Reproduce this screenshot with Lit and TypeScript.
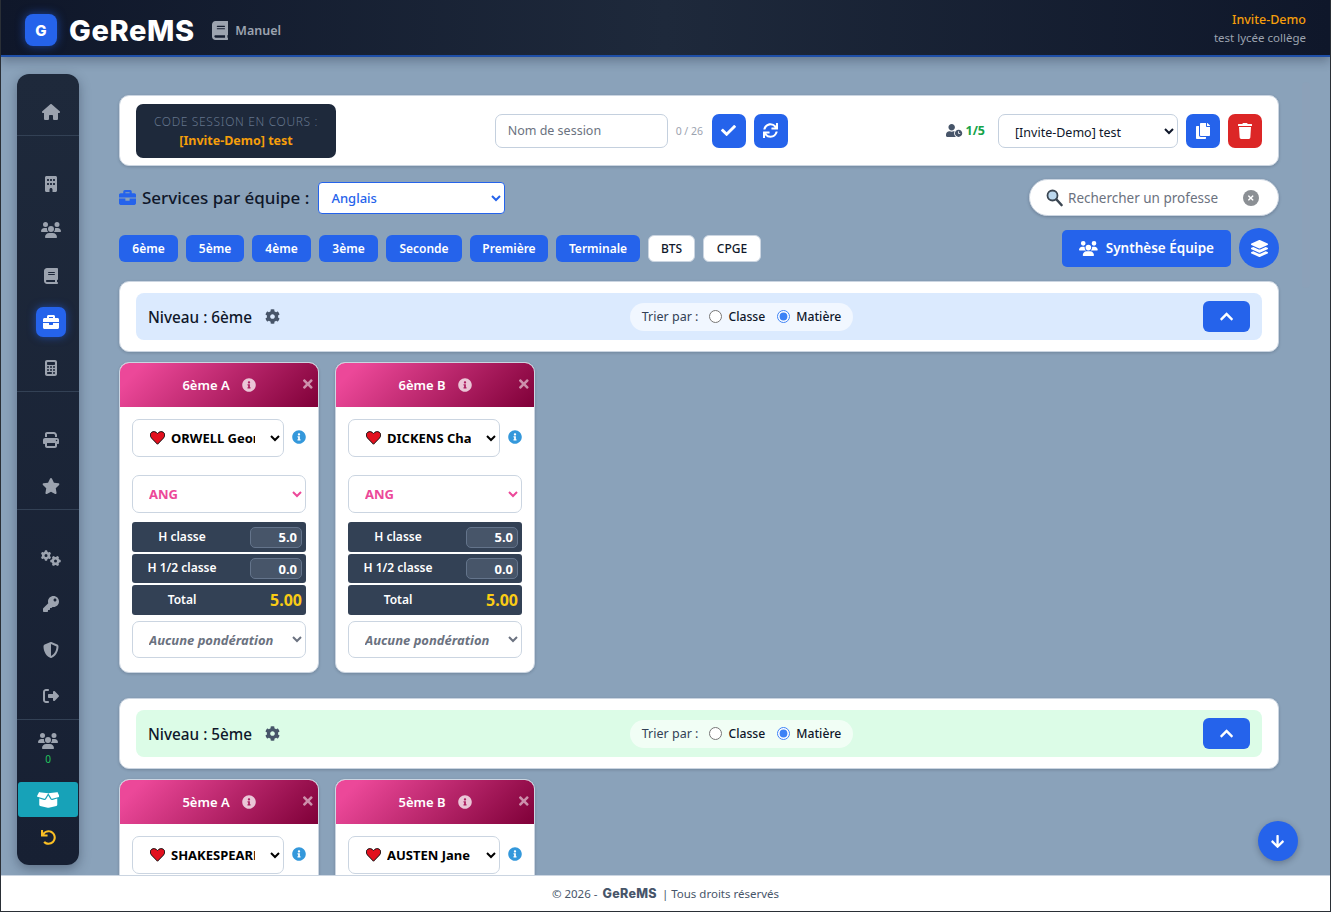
import { LitElement, html, css } from 'lit';
import { customElement } from 'lit/decorators.js';

const ICONS: Record<string, [number, string]> = {
  home: [576, 'M575.800 255.500c0 18-15 32.100-32 32.100h-32l.7 160.200c0 2.700-.2 5.400-.5 8.100V472c0 22.100-17.900 40-40 40H456c-1.100 0-2.200 0-3.300-.1c-1.400 .1-2.800 .1-4.200 .1H416 392c-22.100 0-40-17.900-40-40V448 384c0-17.700-14.300-32-32-32H256c-17.700 0-32 14.300-32 32v64 24c0 22.100-17.900 40-40 40H160 128.100c-1.500 0-3-.1-4.500-.2c-1.200 .1-2.400 .2-3.600 .2H104c-22.100 0-40-17.900-40-40V360c0-.9 0-1.900 .1-2.800V287.600H32c-18 0-32-14-32-32.100c0-9 3-17 10-24L266.400 8c7-7 15-8 22-8s15 2 21 7L564.800 231.500c8 7 12 15 11 24z'],
  building: [384, 'M48 0C21.500 0 0 21.500 0 48V464c0 26.500 21.500 48 48 48h96V432c0-26.500 21.500-48 48-48s48 21.500 48 48v80h96c26.500 0 48-21.500 48-48V48c0-26.500-21.500-48-48-48H48zM64 240c0-8.800 7.200-16 16-16h32c8.800 0 16 7.200 16 16v32c0 8.800-7.200 16-16 16H80c-8.800 0-16-7.200-16-16V240zm112-16h32c8.800 0 16 7.200 16 16v32c0 8.800-7.200 16-16 16H176c-8.800 0-16-7.200-16-16V240c0-8.800 7.200-16 16-16zm80 16c0-8.800 7.200-16 16-16h32c8.800 0 16 7.200 16 16v32c0 8.800-7.200 16-16 16H272c-8.800 0-16-7.200-16-16V240zM80 96h32c8.800 0 16 7.200 16 16v32c0 8.800-7.200 16-16 16H80c-8.800 0-16-7.200-16-16V112c0-8.800 7.200-16 16-16zm80 16c0-8.800 7.200-16 16-16h32c8.800 0 16 7.200 16 16v32c0 8.800-7.200 16-16 16H176c-8.800 0-16-7.200-16-16V112zM272 96h32c8.800 0 16 7.200 16 16v32c0 8.800-7.200 16-16 16H272c-8.800 0-16-7.200-16-16V112c0-8.800 7.200-16 16-16z'],
  users: [640, 'M144 0a80 80 0 1 1 0 160A80 80 0 1 1 144 0zM512 0a80 80 0 1 1 0 160A80 80 0 1 1 512 0zM0 298.700C0 239.800 47.800 192 106.700 192h42.700c15.900 0 31 3.500 44.600 9.700c-1.300 7.200-1.900 14.700-1.900 22.300c0 38.200 16.800 72.500 43.300 96c-.2 0-.4 0-.7 0H21.300C9.600 320 0 310.400 0 298.700zM405.300 320c-.2 0-.4 0-.7 0c26.600-23.500 43.300-57.800 43.300-96c0-7.600-.7-15-1.900-22.300c13.600-6.300 28.700-9.700 44.600-9.700h42.700C592.200 192 640 239.800 640 298.700c0 11.800-9.600 21.300-21.300 21.300H405.400zM224 224a96 96 0 1 1 192 0 96 96 0 1 1 -192 0zM128 485.300C128 411.700 187.700 352 261.300 352H378.700C452.300 352 512 411.700 512 485.300c0 14.700-11.900 26.700-26.700 26.700H154.700c-14.700 0-26.700-11.900-26.700-26.700z'],
  book: [448, 'M96 0C43 0 0 43 0 96V416c0 53 43 96 96 96H384h32c17.700 0 32-14.300 32-32s-14.300-32-32-32V384c17.700 0 32-14.300 32-32V32c0-17.700-14.300-32-32-32H384 96zm0 384H352v64H96c-17.700 0-32-14.300-32-32s14.300-32 32-32zm32-240c0-8.800 7.200-16 16-16H336c8.800 0 16 7.200 16 16s-7.200 16-16 16H144c-8.800 0-16-7.200-16-16zm16 48H336c8.800 0 16 7.200 16 16s-7.200 16-16 16H144c-8.800 0-16-7.200-16-16s7.200-16 16-16z'],
  briefcase: [512, 'M320 336c0 8.840-7.160 16-16 16h-96c-8.840 0-16-7.160-16-16v-48H0v144c0 25.600 22.400 48 48 48h416c25.600 0 48-22.400 48-48V288H320v48zm144-208h-80V80c0-25.600-22.400-48-48-48H176c-25.600 0-48 22.400-48 48v48H48c-25.600 0-48 22.400-48 48v80h512v-80c0-25.600-22.400-48-48-48zm-144 0H192V96h128v32z'],
  calculator: [384, 'M64 0C28.700 0 0 28.700 0 64V448c0 35.300 28.700 64 64 64H320c35.300 0 64-28.700 64-64V64c0-35.300-28.700-64-64-64H64zM96 64H288c17.700 0 32 14.300 32 32v32c0 17.700-14.300 32-32 32H96c-17.700 0-32-14.300-32-32V96c0-17.700 14.300-32 32-32zm32 160a32 32 0 1 1 -64 0 32 32 0 1 1 64 0zM96 352a32 32 0 1 1 0-64 32 32 0 1 1 0 64zM64 416c0-17.700 14.300-32 32-32h96c17.700 0 32 14.300 32 32s-14.300 32-32 32H96c-17.700 0-32-14.300-32-32zM192 256a32 32 0 1 1 0-64 32 32 0 1 1 0 64zm32 64a32 32 0 1 1 -64 0 32 32 0 1 1 64 0zm64-64a32 32 0 1 1 0-64 32 32 0 1 1 0 64zm32 64a32 32 0 1 1 -64 0 32 32 0 1 1 64 0zM288 448a32 32 0 1 1 0-64 32 32 0 1 1 0 64z'],
  print: [512, 'M128 0C92.700 0 64 28.700 64 64v96h64V64H354.700L384 93.300V160h64V93.300c0-17-6.700-33.300-18.700-45.300L400 18.700C388 6.700 371.700 0 354.700 0H128zM384 352v32 64H128V384 368 352H384zm64 32h32c17.700 0 32-14.300 32-32V256c0-35.300-28.700-64-64-64H64c-35.300 0-64 28.700-64 64v96c0 17.700 14.300 32 32 32H64v64c0 35.300 28.700 64 64 64H384c35.300 0 64-28.700 64-64V384zM432 248a24 24 0 1 1 0 48 24 24 0 1 1 0-48z'],
  star: [576, 'M259.300 17.800L194 150.200 47.900 171.500c-26.200 3.800-36.700 36.100-17.700 54.600l105.700 103-25 145.500c-4.500 26.300 23.200 46 46.400 33.700L288 439.600l130.700 68.700c23.200 12.200 50.900-7.400 46.400-33.700l-25-145.500 105.700-103c19-18.500 8.500-50.800-17.700-54.600L382 150.200 316.700 17.800c-11.700-23.600-45.600-23.900-57.400 0z'],
  cogs: [640, 'M308.500 135.300c7.100-6.300 9.900-16.200 6.200-25c-2.300-5.300-4.800-10.500-7.600-15.500L304 89.400c-3-5-6.300-9.900-9.800-14.600c-5.700-7.600-15.700-10.100-24.700-7.100l-28.200 9.300c-10.700-8.800-23-16-36.200-20.900L199 27.100c-1.900-9.300-9.100-16.700-18.500-17.800C173.900 8.400 167.200 8 160.400 8h-.7c-6.800 0-13.500 .4-20.100 1.200c-9.400 1.100-16.600 8.600-18.500 17.800L115 56.100c-13.300 5-25.500 12.100-36.200 20.900L50.500 67.800c-9-3-19-.5-24.700 7.100c-3.500 4.700-6.800 9.600-9.900 14.600l-3 5.300c-2.800 5-5.300 10.200-7.600 15.600c-3.700 8.700-.9 18.600 6.200 25l22.200 19.800C32.600 161.900 32 168.900 32 176s.6 14.100 1.700 20.900L11.500 216.700c-7.100 6.300-9.900 16.200-6.200 25c2.300 5.300 4.800 10.500 7.600 15.600l3 5.200c3 5.100 6.300 9.900 9.900 14.600c5.700 7.600 15.700 10.100 24.700 7.100l28.200-9.300c10.700 8.800 23 16 36.200 20.900l6.100 29.100c1.900 9.300 9.100 16.700 18.500 17.800c6.700 .8 13.500 1.200 20.400 1.200s13.700-.4 20.400-1.200c9.400-1.100 16.600-8.600 18.500-17.800l6.100-29.100c13.300-5 25.500-12.100 36.200-20.900l28.200 9.300c9 3 19 .5 24.700-7.100c3.500-4.700 6.800-9.500 9.800-14.600l3.100-5.400c2.800-5 5.300-10.100 7.600-15.500c3.700-8.700 .9-18.600-6.200-25l-22.200-19.800c1.100-6.800 1.700-13.800 1.700-20.900s-.6-14.100-1.700-20.900l22.200-19.800zM112 176a48 48 0 1 1 96 0 48 48 0 1 1 -96 0zM504.700 500.500c6.300 7.100 16.200 9.900 25 6.200c5.300-2.300 10.500-4.800 15.500-7.600l5.400-3.100c5-3 9.900-6.300 14.600-9.800c7.600-5.700 10.100-15.700 7.100-24.700l-9.300-28.200c8.800-10.700 16-23 20.900-36.200l29.100-6.100c9.300-1.900 16.700-9.100 17.800-18.500c.8-6.700 1.200-13.500 1.200-20.400s-.4-13.700-1.200-20.400c-1.100-9.400-8.600-16.600-17.800-18.500L583.900 307c-5-13.300-12.100-25.500-20.900-36.200l9.300-28.200c3-9 .5-19-7.100-24.700c-4.700-3.500-9.600-6.800-14.600-9.900l-5.300-3c-5-2.800-10.200-5.300-15.600-7.600c-8.700-3.700-18.600-.9-25 6.200l-19.800 22.200c-6.800-1.100-13.800-1.700-20.900-1.700s-14.100 .6-20.900 1.700l-19.800-22.200c-6.300-7.100-16.200-9.900-25-6.200c-5.300 2.300-10.500 4.800-15.600 7.600l-5.200 3c-5.100 3-9.900 6.300-14.600 9.900c-7.600 5.700-10.100 15.700-7.100 24.700l9.300 28.200c-8.800 10.700-16 23-20.900 36.200L315.100 313c-9.300 1.900-16.700 9.100-17.800 18.500c-.8 6.700-1.200 13.500-1.200 20.400s.4 13.700 1.200 20.400c1.100 9.400 8.600 16.600 17.800 18.500l29.100 6.100c5 13.300 12.100 25.500 20.900 36.200l-9.300 28.200c-3 9-.5 19 7.100 24.700c4.700 3.500 9.500 6.800 14.600 9.800l5.400 3.100c5 2.800 10.100 5.300 15.500 7.600c8.700 3.700 18.600 .9 25-6.200l19.800-22.200c6.800 1.100 13.800 1.700 20.900 1.700s14.100-.6 20.900-1.700l19.800 22.200zM464 304a48 48 0 1 1 0 96 48 48 0 1 1 0-96z'],
  key: [512, 'M512 176.001C512 273.203 433.202 352 336 352c-11.220 0-22.190-1.062-32.827-3.069l-24.012 27.014A23.999 23.999 0 0 1 261.223 384H224v40c0 13.255-10.745 24-24 24h-40v40c0 13.255-10.745 24-24 24H24c-13.255 0-24-10.745-24-24v-78.059c0-6.365 2.529-12.470 7.029-16.971l161.802-161.802C163.108 213.814 160 195.271 160 176 160 78.798 238.797.001 335.999 0 433.488-.001 512 78.511 512 176.001zM336 128c0 26.510 21.490 48 48 48s48-21.490 48-48-21.490-48-48-48-48 21.490-48 48z'],
  shield: [512, 'M256 0c4.600 0 9.200 1 13.400 2.900L457.700 82.800c22 9.300 38.400 31 38.300 57.200c-.5 99.200-41.300 280.700-213.600 363.200c-16.700 8-36.100 8-52.800 0C57.300 420.700 16.500 239.200 16 140c-.1-26.200 16.300-47.900 38.300-57.200L242.700 2.900C246.800 1 251.400 0 256 0zm0 66.800V444.800C394 378 431.100 230.100 432 141.400L256 66.800l0 0z'],
  signout: [512, 'M377.900 105.900L500.700 228.700c7.200 7.200 11.300 17.100 11.300 27.300s-4.100 20.100-11.300 27.300L377.900 406.100c-6.400 6.400-15 9.900-24 9.900c-18.700 0-33.900-15.200-33.900-33.900l0-62.100-128 0c-17.700 0-32-14.300-32-32l0-64c0-17.700 14.300-32 32-32l128 0 0-62.100c0-18.700 15.200-33.900 33.900-33.900c9 0 17.600 3.600 24 9.900zM160 96L96 96c-17.700 0-32 14.300-32 32l0 256c0 17.700 14.300 32 32 32l64 0c17.700 0 32 14.300 32 32s-14.300 32-32 32l-64 0c-53 0-96-43-96-96L0 128C0 75 43 32 96 32l64 0c17.700 0 32 14.300 32 32s-14.300 32-32 32z'],
  boxopen: [640, 'M425.700 256c-16.900 0-32.800-9-41.400-23.400L320 126l-64.200 106.600c-8.700 14.500-24.600 23.500-41.500 23.500-4.500 0-9-.6-13.300-1.900L64 215v178c0 14.700 10 27.500 24.200 31l216.200 54.100c10.200 2.500 20.900 2.500 31 0L551.800 424c14.200-3.600 24.200-16.400 24.200-31V215l-137 39.100c-4.300 1.300-8.800 1.900-13.300 1.900zm212.600-112.200L586.800 41c-3.100-6.200-9.800-9.800-16.700-8.900L320 64l91.700 152.100c3.800 6.300 11.400 9.300 18.500 7.300l197.900-56.500c9.900-2.900 14.700-13.900 10.200-23.100zM53.200 41L1.700 143.800c-4.600 9.200.3 20.200 10.100 23l197.900 56.500c7.100 2 14.700-1 18.500-7.300L320 64 69.800 32.100c-6.900-.8-13.500 2.700-16.600 8.900z'],
  undo: [512, 'M212.333 224.333H12c-6.627 0-12-5.373-12-12V12C0 5.373 5.373 0 12 0h48c6.627 0 12 5.373 12 12v78.112C117.773 39.279 184.260 7.470 258.175 8.007c136.906.994 246.448 111.623 246.157 248.532C504.041 393.258 393.120 504 256.333 504c-64.089 0-122.496-24.313-166.510-64.215-5.099-4.622-5.334-12.554-.467-17.420l33.967-33.967c4.474-4.474 11.662-4.717 16.401-.525C170.760 415.336 211.580 432 256.333 432c97.268 0 176-78.716 176-176 0-97.267-78.716-176-176-176-58.496 0-110.280 28.476-142.274 72.333h98.274c6.627 0 12 5.373 12 12v48c0 6.627-5.373 12-12 12z'],
  check: [512, 'M173.898 439.404l-166.400-166.400c-9.997-9.997-9.997-26.206 0-36.204l36.203-36.204c9.997-9.998 26.207-9.998 36.204 0L192 312.690 432.095 72.596c9.997-9.997 26.207-9.997 36.204 0l36.203 36.204c9.997 9.997 9.997 26.206 0 36.204l-294.400 294.401c-9.998 9.997-26.207 9.997-36.204-.001z'],
  sync: [512, 'M440.650 12.570l4 82.770A247.160 247.160 0 0 0 255.830 8C134.730 8 33.910 94.920 12.290 209.820A12 12 0 0 0 24.090 224h49.050a12 12 0 0 0 11.670-9.260 175.910 175.910 0 0 1 317-56.940l-101.460-4.860a12 12 0 0 0-12.570 12v47.410a12 12 0 0 0 12 12H500a12 12 0 0 0 12-12V12a12 12 0 0 0-12-12h-47.370a12 12 0 0 0-11.980 12.570zM255.830 432a175.610 175.610 0 0 1-146-77.800l101.800 4.870a12 12 0 0 0 12.570-12v-47.400a12 12 0 0 0-12-12H12a12 12 0 0 0-12 12V500a12 12 0 0 0 12 12h47.350a12 12 0 0 0 12-12.600l-4.150-82.570A247.170 247.170 0 0 0 255.830 504c121.110 0 221.930-86.920 243.550-201.820a12 12 0 0 0-11.800-14.180h-49.050a12 12 0 0 0-11.670 9.260A175.860 175.860 0 0 1 255.830 432z'],
  copy: [448, 'M320 448v40c0 13.255-10.745 24-24 24H24c-13.255 0-24-10.745-24-24V120c0-13.255 10.745-24 24-24h72v296c0 30.879 25.121 56 56 56h168zm0-344V0H152c-13.255 0-24 10.745-24 24v368c0 13.255 10.745 24 24 24h272c13.255 0 24-10.745 24-24V128H344c-13.200 0-24-10.800-24-24zm120.971-31.029L375.029 7.029A24 24 0 0 0 358.059 0H352v96h96v-6.059a24 24 0 0 0-7.029-16.970z'],
  trash: [448, 'M432 32H312l-9.400-18.700A24 24 0 0 0 281.100 0H166.800a23.720 23.720 0 0 0-21.400 13.300L136 32H16A16 16 0 0 0 0 48v32a16 16 0 0 0 16 16h416a16 16 0 0 0 16-16V48a16 16 0 0 0-16-16zM53.200 467a48 48 0 0 0 47.900 45h245.800a48 48 0 0 0 47.900-45L416 128H32z'],
  userclock: [640, 'M496 224c-79.600 0-144 64.400-144 144s64.400 144 144 144 144-64.400 144-144-64.400-144-144-144zm64 150.300c0 5.300-4.400 9.700-9.700 9.700h-60.600c-5.300 0-9.700-4.400-9.700-9.700v-76.600c0-5.300 4.400-9.700 9.700-9.700h12.600c5.300 0 9.700 4.400 9.700 9.700V352h38.300c5.300 0 9.700 4.400 9.700 9.700v12.600zM320 368c0-27.800 6.700-54.100 18.200-77.500-8-1.500-16.200-2.500-24.600-2.500h-16.700c-22.200 10.200-46.900 16-72.900 16s-50.600-5.800-72.900-16h-16.700C60.200 288 0 348.200 0 422.400V464c0 26.500 21.500 48 48 48h347.100c-45.300-31.900-75.100-84.500-75.100-144zm-96-112c70.700 0 128-57.300 128-128S294.700 0 224 0 96 57.300 96 128s57.300 128 128 128z'],
  layers: [512, 'M12.410 148.020l232.940 105.670c6.800 3.090 14.490 3.090 21.290 0l232.940-105.670c16.550-7.510 16.550-32.520 0-40.030L266.650 2.310a25.607 25.607 0 0 0-21.290 0L12.410 107.980c-16.550 7.510-16.550 32.530 0 40.040zm487.180 88.280l-58.090-26.330-161.640 73.270c-7.560 3.430-15.590 5.170-23.860 5.170s-16.290-1.740-23.860-5.170L70.510 209.970l-58.100 26.330c-16.550 7.500-16.550 32.500 0 40l232.940 105.590c6.800 3.080 14.490 3.080 21.290 0L499.590 276.300c16.550-7.500 16.550-32.500 0-40zm0 127.800l-57.870-26.230-161.860 73.370c-7.560 3.430-15.590 5.170-23.860 5.170s-16.290-1.740-23.860-5.170L70.290 337.870 12.410 364.100c-16.550 7.500-16.550 32.500 0 40l232.940 105.590c6.800 3.080 14.490 3.080 21.290 0L499.590 404.100c16.550-7.500 16.550-32.500 0-40z'],
  chevup: [448, 'M240.971 130.524l194.343 194.343c9.373 9.373 9.373 24.569 0 33.941l-22.667 22.667c-9.357 9.357-24.522 9.375-33.901.040L224 227.495 69.255 381.516c-9.379 9.335-24.544 9.317-33.901-.040l-22.667-22.667c-9.373-9.373-9.373-24.569 0-33.941L207.030 130.525c9.372-9.373 24.568-9.373 33.941-.001z'],
  arrowdown: [448, 'M413.100 222.500l22.200 22.200c9.400 9.400 9.400 24.600 0 33.900L241 473c-9.400 9.400-24.600 9.400-33.900 0L12.700 278.600c-9.400-9.400-9.400-24.600 0-33.900l22.200-22.200c9.500-9.500 25-9.300 34.300.4L184 343.400V56c0-13.300 10.700-24 24-24h32c13.300 0 24 10.700 24 24v287.400l114.800-120.500c9.300-9.800 24.800-10 34.300-.4z'],
  info: [512, 'M256 8C119.043 8 8 119.083 8 256c0 136.997 111.043 248 248 248s248-111.003 248-248C504 119.083 392.957 8 256 8zm0 110c23.196 0 42 18.804 42 42s-18.804 42-42 42-42-18.804-42-42 18.804-42 42-42zm56 254c0 6.627-5.373 12-12 12h-88c-6.627 0-12-5.373-12-12v-24c0-6.627 5.373-12 12-12h12v-64h-12c-6.627 0-12-5.373-12-12v-24c0-6.627 5.373-12 12-12h64c6.627 0 12 5.373 12 12v100h12c6.627 0 12 5.373 12 12v24z'],
  times: [352, 'M242.720 256l100.070-100.070c12.280-12.280 12.280-32.190 0-44.480l-22.240-22.240c-12.280-12.280-32.190-12.280-44.480 0L176 189.280 75.930 89.210c-12.280-12.280-32.190-12.280-44.480 0L9.210 111.450c-12.280 12.280-12.280 32.190 0 44.480L109.280 256 9.210 356.070c-12.280 12.280-12.280 32.190 0 44.480l22.240 22.240c12.280 12.280 32.200 12.280 44.480 0L176 322.720l100.070 100.070c12.280 12.280 32.200 12.280 44.480 0l22.240-22.240c12.280-12.280 12.280-32.190 0-44.480L242.720 256z'],
  cog: [512, 'M487.400 315.700l-42.600-24.600c4.300-23.200 4.300-47 0-70.200l42.600-24.600c4.900-2.800 7.100-8.600 5.500-14-11.100-35.600-30-67.800-54.700-94.600-3.800-4.100-10-5.100-14.800-2.300L380.800 110c-17.900-15.400-38.500-27.300-60.800-35.100V25.800c0-5.600-3.900-10.500-9.400-11.700-36.700-8.200-74.300-7.800-109.200 0-5.500 1.200-9.400 6.100-9.400 11.700V75c-22.200 7.900-42.800 19.800-60.800 35.100L88.700 85.500c-4.900-2.800-11-1.900-14.800 2.300-24.700 26.700-43.600 58.900-54.700 94.600-1.700 5.400.6 11.200 5.500 14L67.300 221c-4.300 23.200-4.300 47 0 70.200l-42.600 24.600c-4.900 2.800-7.100 8.600-5.500 14 11.100 35.600 30 67.800 54.700 94.600 3.800 4.100 10 5.100 14.800 2.300l42.600-24.600c17.900 15.400 38.500 27.300 60.800 35.100v49.200c0 5.600 3.900 10.500 9.400 11.700 36.700 8.200 74.300 7.800 109.200 0 5.500-1.200 9.400-6.100 9.400-11.700v-49.200c22.200-7.900 42.800-19.800 60.800-35.100l42.600 24.600c4.900 2.800 11 1.900 14.800-2.300 24.700-26.700 43.600-58.900 54.700-94.600 1.500-5.500-.7-11.300-5.600-14.100zM256 336c-44.100 0-80-35.900-80-80s35.900-80 80-80 80 35.900 80 80-35.900 80-80 80z'],
};

const icon = (name: string, size: number) => {
  const [w, d] = ICONS[name];
  return html`<svg class="ic" viewBox="0 0 ${w} 512" height=${size} width=${(size * w) / 512} fill="currentColor"><path d=${d}></path></svg>`;
};

const NAV_GROUPS = [
  ['home'],
  ['building', 'users', 'book', 'briefcase', 'calculator'],
  ['print', 'star'],
  ['cogs', 'key', 'shield', 'signout'],
];

// name, button width
const LEVELS: [string, number][] = [
  ['6ème', 59], ['5ème', 58], ['4ème', 59], ['3ème', 59],
  ['Seconde', 76], ['Première', 78], ['Terminale', 84],
];
const OTHER_LEVELS: [string, number][] = [['BTS', 47], ['CPGE', 58]];

const SECTIONS = [
  {
    name: '6ème', tint: 'blue',
    classes: [
      { name: '6ème A', prof: 'ORWELL George' },
      { name: '6ème B', prof: 'DICKENS Charles' },
    ],
  },
  {
    name: '5ème', tint: 'green',
    classes: [
      { name: '5ème A', prof: 'SHAKESPEARE William' },
      { name: '5ème B', prof: 'AUSTEN Jane' },
    ],
  },
];

@customElement('app-root')
export class AppRoot extends LitElement {
  static styles = css`
    :host {
      display: flex;
      flex-direction: column;
      height: 912px;
      box-sizing: border-box;
      border: 1px solid #2a2f36;
      border-top: 0;
      overflow: hidden;
      position: relative;
      font-family: "Noto Sans", sans-serif;
      color: #0f172a;
      background: #8aa2ba;
    }
    * { box-sizing: border-box; }
    .ic { display: block; flex: none; }
    select, input { font-family: inherit; }

    .top {
      height: 57px;
      flex: none;
      display: flex;
      align-items: center;
      padding: 5px 24px 0;
      background: linear-gradient(90deg, #0f172a, #1e293b 50%, #0f172a);
      border-bottom: 2px solid #1e4fa8;
      box-shadow: 0 4px 10px rgba(15, 23, 42, 0.3);
      z-index: 2;
    }
    .logo {
      width: 32px;
      height: 32px;
      border-radius: 8px;
      background: #2563eb;
      color: #fff;
      font: 800 15px Inter, sans-serif;
      display: flex;
      align-items: center;
      justify-content: center;
      box-shadow: 0 0 10px rgba(37, 99, 235, 0.6);
    }
    .brand {
      margin-left: 12px;
      font: 800 29px Inter, sans-serif;
      letter-spacing: 0.6px;
      color: #fff;
    }
    .manual {
      margin-left: 17px;
      display: flex;
      align-items: center;
      gap: 7px;
      color: #9ca3af;
      font-size: 12.5px;
      font-weight: 600;
    }
    .who {
      margin: -4px 0 0 auto;
      text-align: right;
      line-height: 17px;
    }
    .who b { display: block; color: #f59e0b; font-size: 12.5px; font-weight: 500; }
    .who span { color: #9ca3af; font-size: 11.5px; }

    .main {
      flex: 1;
      min-height: 0;
      display: flex;
      gap: 40px;
      padding: 17px 0 10px 16px;
      overflow: hidden;
    }
    .side {
      width: 62px;
      flex: none;
      height: 791px;
      border-radius: 12px;
      background: linear-gradient(180deg, #1e293b, #172033);
      box-shadow: 0 4px 12px rgba(15, 23, 42, 0.35);
      padding-top: 15px;
      color: #9ca3af;
      display: flex;
      flex-direction: column;
    }
    .group {
      padding: 0 1px 0 7px;
      border-bottom: 1px solid #334155;
    }
    .group + .group { margin-top: 25px; }
    .item {
      height: 46px;
      display: flex;
      align-items: center;
      justify-content: center;
    }
    .item.on span {
      width: 30px;
      height: 30px;
      border-radius: 7px;
      background: #2563eb;
      color: #fff;
      display: flex;
      align-items: center;
      justify-content: center;
      box-shadow: 0 0 8px rgba(37, 99, 235, 0.6);
    }
    .online {
      padding-top: 13px;
      height: 62px;
      display: flex;
      flex-direction: column;
      align-items: center;
      font-size: 10px;
      color: #22c55e;
    }
    .online .ic { color: #9ca3af; margin-bottom: 3px; }
    .box {
      margin: 0 1px;
      height: 35px;
      border-radius: 3px;
      background: #17a2b8;
      color: #fff;
      display: flex;
      align-items: center;
      justify-content: center;
    }
    .undo {
      color: #fbbf24;
      flex: 1;
      display: flex;
      justify-content: center;
      padding-top: 13px;
    }

    .content {
      width: 1160px;
      flex: none;
      padding-top: 21px;
    }
    .card {
      background: #fff;
      border-radius: 10px;
      border: 1px solid #cbd5e1;
      box-shadow: 0 1px 3px rgba(15, 23, 42, 0.2);
    }
    .session {
      height: 71px;
      padding: 0 16px;
      display: flex;
      align-items: center;
      justify-content: space-between;
    }
    .code {
      width: 200px;
      height: 54px;
      border-radius: 7px;
      background: #1e293b;
      text-align: center;
      padding-top: 8px;
      line-height: 19px;
    }
    .code span { display: block; font-size: 12px; font-weight: 300; letter-spacing: 0.65px; color: #64748b; }
    .code b { display: block; font-size: 12.5px; font-weight: 700; color: #f59e0b; }
    .row { display: flex; align-items: center; }
    .g8 { gap: 8px; }
    .field {
      height: 34px;
      border: 1px solid #c4d0de;
      border-radius: 7px;
      background: #fff;
      padding: 0 12px;
      font-size: 12.5px;
      color: #0f172a;
      outline: none;
    }
    .field::placeholder { color: #6b7280; opacity: 1; }
    .name { width: 173px; }
    .count { font-size: 10.5px; color: #9ca3af; margin-left: 8px; width: 28px; white-space: nowrap; }
    .sq {
      width: 34px;
      height: 34px;
      border-radius: 7px;
      background: #2563eb;
      color: #fff;
      display: flex;
      align-items: center;
      justify-content: center;
    }
    .sq.red { background: #dc2626; }
    .quota {
      display: flex;
      align-items: center;
      gap: 3px;
      color: #475569;
      margin-right: 13px;
    }
    .quota b { color: #16a34a; font-size: 12.5px; font-weight: 700; }
    .sessel { width: 180px; padding-top: 3px; }

    .line {
      display: flex;
      align-items: center;
      margin-top: 13px;
      height: 37px;
    }
    .title {
      display: flex;
      align-items: center;
      gap: 6px;
      font-size: 17px;
      font-weight: 500;
      color: #0f172a;
    }
    .title .ic { color: #2563eb; }
    .team {
      margin-left: 9px;
      width: 187px;
      height: 32px;
      border: 1px solid #2563eb;
      border-radius: 4px;
      background: #fff;
      color: #2563eb;
      font-size: 13px;
      font-weight: 500;
      padding-left: 8px;
      outline: none;
    }
    .search {
      margin-left: auto;
      width: 250px;
      height: 37px;
      border-radius: 19px;
      background: #fff;
      border: 1px solid #cbd5e1;
      box-shadow: 0 1px 3px rgba(15, 23, 42, 0.25);
      display: flex;
      align-items: center;
      padding: 0 18px 0 16px;
    }
    .search input {
      flex: none;
      width: 150px;
      margin: 0 25px 0 5px;
      border: 0;
      padding: 0;
      font-size: 13.5px;
      outline: none;
      background: transparent;
    }
    .search input::placeholder { color: #6b7280; opacity: 1; }
    .clear {
      width: 16px;
      height: 16px;
      border-radius: 50%;
      background: #8b8f94;
      color: #fff;
      display: flex;
      align-items: center;
      justify-content: center;
      flex: none;
    }

    .levels {
      display: flex;
      align-items: center;
      gap: 8px;
      margin-top: 12px;
      height: 40px;
    }
    .lvl {
      height: 27px;
      flex: none;
      border-radius: 6px;
      background: #2563eb;
      color: #fff;
      font-size: 12px;
      font-weight: 600;
      display: flex;
      align-items: center;
      justify-content: center;
    }
    .lvl.off {
      background: #fff;
      color: #0f172a;
      font-weight: 500;
      border: 1px solid #cbd5e1;
    }
    .synth {
      margin-left: auto;
      width: 169px;
      height: 37px;
      border-radius: 5px;
      background: #2563eb;
      color: #fff;
      font-size: 13.5px;
      font-weight: 600;
      display: flex;
      align-items: center;
      justify-content: center;
      gap: 8px;
    }
    .round {
      width: 40px;
      height: 40px;
      border-radius: 50%;
      background: #2563eb;
      color: #fff;
      display: flex;
      align-items: center;
      justify-content: center;
    }

    .section { margin-top: 13px; }
    .section + .section { margin-top: 25px; }
    .head { height: 71px; padding: 11px 16px; }
    .band {
      height: 47px;
      border-radius: 8px;
      padding: 0 12px;
      display: flex;
      align-items: center;
      justify-content: space-between;
    }
    .band.blue { background: #dbeafe; }
    .band.green { background: #dcfce7; }
    .lname {
      display: flex;
      align-items: center;
      gap: 13px;
      font-size: 15.3px;
      font-weight: 500;
    }
    .lname .ic { color: #475569; }
    .sort {
      height: 28px;
      border-radius: 14px;
      background: rgba(255, 255, 255, 0.6);
      padding: 0 12px;
      display: flex;
      align-items: center;
      font-size: 12.2px;
      color: #0f172a;
      font-weight: 500;
    }
    .sort span { color: #334155; margin-right: 11px; font-weight: 400; font-size: 12.5px; }
    .sort input { margin: 0 6px 0 0; width: 13px; height: 13px; accent-color: #3b82f6; }
    .sort label { display: flex; align-items: center; margin-right: 12px; }
    .sort label:last-child { margin-right: 0; }
    .fold {
      width: 47px;
      height: 31px;
      border-radius: 6px;
      background: #2563eb;
      color: #fff;
      display: flex;
      align-items: center;
      justify-content: center;
    }

    .classes { display: flex; gap: 16px; margin-top: 10px; }
    .cls {
      width: 200px;
      height: 311px;
      border-radius: 10px;
      background: #fff;
      border: 1px solid #cbd5e1;
      box-shadow: 0 1px 3px rgba(15, 23, 42, 0.2);
      overflow: hidden;
    }
    .chead {
      height: 44px;
      position: relative;
      background: linear-gradient(135deg, #ec4899 10%, #7f0038);
      color: #fff;
      display: flex;
      align-items: center;
      justify-content: center;
      gap: 12px;
      font-size: 13px;
      font-weight: 600;
    }
    .chead .i { color: rgba(255, 255, 255, 0.75); }
    .chead .x {
      position: absolute;
      right: 5px;
      top: 14px;
      color: rgba(255, 255, 255, 0.55);
    }
    .cbody { padding: 12px; }
    .prof { display: flex; align-items: center; height: 38px; position: relative; }
    .prof select {
      width: 152px;
      height: 38px;
      border: 1px solid #cbd5e1;
      border-radius: 7px;
      background: #fff;
      padding: 0 12px 0 34px;
      color: #000;
      font-size: 13px;
      font-weight: 700;
      outline: none;
    }
    .heart { position: absolute; left: 18px; top: 12px; }
    .prof .ic.in { margin-left: 8px; color: #3498db; margin-top: -2px; }
    .pick {
      display: block;
      width: 174px;
      height: 38px;
      border: 1px solid #cbd5e1;
      border-radius: 7px;
      background: #fff;
      padding-left: 12px;
      font-size: 13px;
      font-weight: 700;
      outline: none;
    }
    .pick.subj { margin-top: 18px; color: #ec4899; }
    .pick.weight {
      margin-top: 6px;
      height: 37px;
      color: #6b7280;
      font-style: italic;
    }
    .hrows { margin-top: 9px; }
    .hrow {
      height: 30px;
      margin-top: 2px;
      border-radius: 3px;
      background: #334155;
      color: #fff;
      display: flex;
      align-items: center;
      padding-right: 4px;
      font-size: 12px;
      font-weight: 600;
    }
    .hrow:first-child { margin-top: 0; }
    .hrow:nth-child(2) { height: 29px; }
    .hrow label { width: 100px; text-align: center; margin-top: -2px; }
    .hrow input {
      margin-left: auto;
      width: 52px;
      height: 21px;
      border-radius: 5px;
      border: 1px solid #64748b;
      background: #475569;
      color: #fff;
      text-align: right;
      padding: 0 4px;
      font-size: 13px;
      font-weight: 700;
      outline: none;
    }
    .hrow b { margin-left: auto; color: #facc15; font-size: 16px; font-weight: 700; }

    .foot {
      height: 36px;
      flex: none;
      background: #fff;
      border-top: 1px solid #cbd5e1;
      display: flex;
      align-items: center;
      justify-content: center;
      font-size: 11.5px;
      color: #475569;
      z-index: 2;
    }
    .foot b { font: 800 12.5px Inter, sans-serif; letter-spacing: 0.3px; margin: 0 5px; color: #475569; }
    .fab {
      position: absolute;
      left: 1257px;
      top: 821px;
      width: 40px;
      height: 40px;
      border-radius: 50%;
      background: #2563eb;
      color: #fff;
      display: flex;
      align-items: center;
      justify-content: center;
      box-shadow: 0 2px 6px rgba(15, 23, 42, 0.3);
      z-index: 3;
    }
    .thumb {
      position: absolute;
      left: 1301px;
      top: 82px;
      width: 8px;
      height: 206px;
      border-radius: 4px;
      background: rgba(148, 163, 184, 0.18);
    }
  `;

  private renderClass(c: { name: string; prof: string }) {
    return html`
      <div class="cls">
        <div class="chead">
          <span>${c.name}</span>
          <span class="i">${icon('info', 14)}</span>
          <span class="x">${icon('times', 14)}</span>
        </div>
        <div class="cbody">
          <div class="prof">
            <select><option>${c.prof}</option></select>
            <svg class="heart" width="15" height="14" viewBox="0 0 24 22"><path d="M12 21 2.500 11.200C-.4 8-.2 3.800 2.700 1.800 5.600-.2 9.600.6 12 4c2.400-3.400 6.400-4.200 9.300-2.200 2.900 2 3.100 6.200.2 9.400z" fill="#e2101e" stroke="#111" stroke-width="1.600"></path></svg>
            <span class="ic in">${icon('info', 14)}</span>
          </div>
          <select class="pick subj"><option>ANG</option></select>
          <div class="hrows">
            <div class="hrow"><label>H classe</label><input value="5.0" /></div>
            <div class="hrow"><label>H 1/2 classe</label><input value="0.0" /></div>
            <div class="hrow"><label>Total</label><b>5.00</b></div>
          </div>
          <select class="pick weight"><option>Aucune pondération</option></select>
        </div>
      </div>
    `;
  }

  render() {
    return html`
      <header class="top">
        <div class="logo">G</div>
        <div class="brand">GeReMS</div>
        <div class="manual">${icon('book', 19)}<span>Manuel</span></div>
        <div class="who"><b>Invite-Demo</b><span>test lycée collège</span></div>
      </header>

      <div class="main">
        <aside class="side">
          ${NAV_GROUPS.map(
            (g) => html`
              <div class="group">
                ${g.map(
                  (n) => html`<div class="item ${n === 'briefcase' ? 'on' : ''}"><span>${icon(n, 16)}</span></div>`,
                )}
              </div>
            `,
          )}
          <div class="online">${icon('users', 16)}<span>0</span></div>
          <div class="box">${icon('boxopen', 18)}</div>
          <div class="undo">${icon('undo', 15)}</div>
        </aside>

        <div class="content">
          <div class="card session">
            <div class="code"><span>CODE SESSION EN COURS :</span><b>[Invite-Demo] test</b></div>
            <div class="row g8">
              <div class="row">
                <input class="field name" placeholder="Nom de session" />
                <span class="count">0 / 26</span>
              </div>
              <div class="sq">${icon('check', 15)}</div>
              <div class="sq">${icon('sync', 15)}</div>
            </div>
            <div class="row">
              <div class="quota">${icon('userclock', 13)}<b>1/5</b></div>
              <div class="row g8">
                <select class="field sessel"><option>[Invite-Demo] test</option></select>
                <div class="sq">${icon('copy', 16)}</div>
                <div class="sq red">${icon('trash', 16)}</div>
              </div>
            </div>
          </div>

          <div class="line">
            <div class="title">${icon('briefcase', 17)}<span>Services par équipe :</span></div>
            <select class="team"><option>Anglais</option></select>
            <div class="search">
              <svg width="17" height="18" viewBox="0 0 17 18">
                <circle cx="6.500" cy="6.500" r="5" fill="#bcd8ee" stroke="#3b4652" stroke-width="1.800"></circle>
                <path d="M10.500 10.500 15.500 16" stroke="#3b4652" stroke-width="2.600" stroke-linecap="round"></path>
              </svg>
              <input placeholder="Rechercher un professeur" />
              <span class="clear">${icon('times', 8)}</span>
            </div>
          </div>

          <div class="levels">
            ${LEVELS.map(([n, w]) => html`<div class="lvl" style="width:${w}px">${n}</div>`)}
            ${OTHER_LEVELS.map(([n, w]) => html`<div class="lvl off" style="width:${w}px">${n}</div>`)}
            <div class="synth">${icon('users', 15)}<span>Synthèse Équipe</span></div>
            <div class="round">${icon('layers', 17)}</div>
          </div>

          ${SECTIONS.map(
            (s) => html`
              <section class="section">
                <div class="card head">
                  <div class="band ${s.tint}">
                    <div class="lname"><span>Niveau : ${s.name}</span>${icon('cog', 15)}</div>
                    <div class="sort">
                      <span>Trier par :</span>
                      <label><input type="radio" name=${s.name} />Classe</label>
                      <label><input type="radio" name=${s.name} checked />Matière</label>
                    </div>
                    <div class="fold">${icon('chevup', 15)}</div>
                  </div>
                </div>
                <div class="classes">${s.classes.map((c) => this.renderClass(c))}</div>
              </section>
            `,
          )}
        </div>
      </div>

      <footer class="foot">© 2026 - <b>GeReMS</b> | Tous droits réservés</footer>
      <div class="thumb"></div>
      <div class="fab">${icon('arrowdown', 15)}</div>
    `;
  }
}
